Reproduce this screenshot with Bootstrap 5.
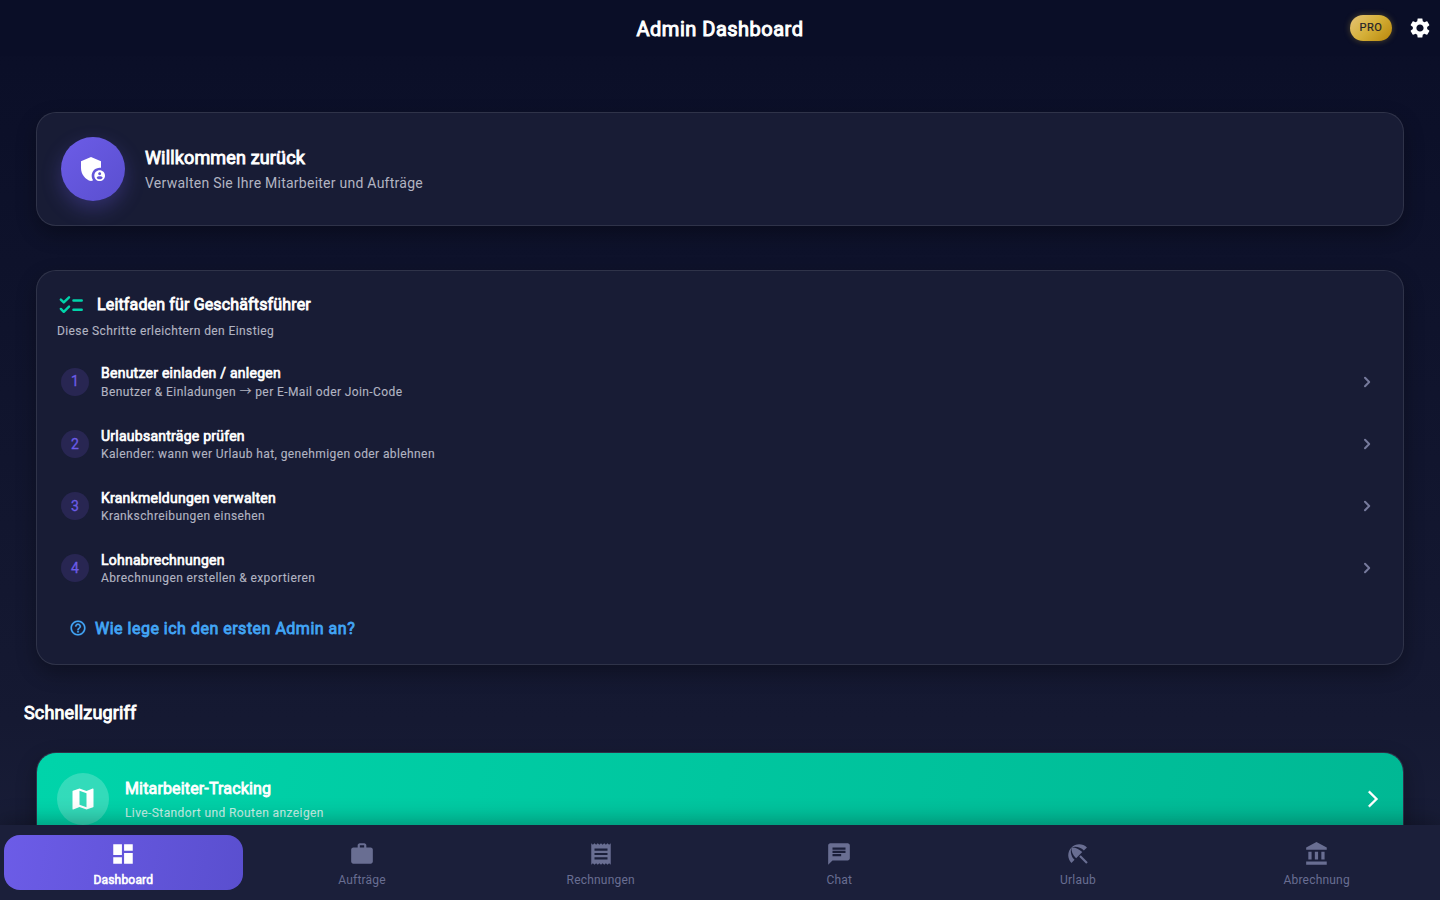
<!DOCTYPE html>
<html lang="de">
<head>
<meta charset="utf-8">
<meta name="viewport" content="width=device-width, initial-scale=1">
<title>Admin Dashboard</title>
<link rel="stylesheet" href="https://cdn.jsdelivr.net/npm/bootstrap@5.3.0/dist/css/bootstrap.min.css">
<style>
html,body{height:100%}
body{font-family:Roboto,"Liberation Sans",sans-serif;font-size:14px;color:#fff;overflow:hidden;background:#0a0e27}
.shell{height:900px;background:linear-gradient(180deg,#0a0e27 0%,#151932 80%,#1a1f3a 100%)}
.strong{-webkit-text-stroke:.05em currentColor}
.semi{-webkit-text-stroke:.02em currentColor}
svg{display:block;fill:currentColor;flex:none}
.topbar{height:56px;background:#0a0e27}
.topbar h1{font-size:20px;line-height:28px;letter-spacing:.5px;padding-top:2px}
.side{right:8px;top:0;height:56px}
.pro{width:42px;height:26px;border-radius:13px;font-size:11px;letter-spacing:.5px;color:#23222a;background:linear-gradient(135deg,#e6c477 0%,#d4af37 50%,#b8860b 100%);box-shadow:0 0 6px rgba(212,175,55,.35)}
.panel{margin:0 36px;border:1px solid rgba(255,255,255,.1);border-radius:20px;background:#181c35;box-shadow:0 8px 20px rgba(0,0,0,.3)}
.welcome{height:114px;margin-top:56px;padding:0 24px}
.avatar{width:64px;height:64px;background:linear-gradient(135deg,#6c5ce7,#5a4fcf);box-shadow:0 8px 20px rgba(108,92,231,.3)}
.welcome h2{font-size:18px;line-height:24px;letter-spacing:.15px;padding-top:1px}
.muted{color:#b2b4c2}
.welcome p{font-size:14px;line-height:20px;letter-spacing:.25px;margin-top:3px}
.guide{height:395px;margin-top:44px;padding:20px}
.guide h2{font-size:16px;line-height:24px;letter-spacing:.15px}
.small-copy{font-size:12px;line-height:16px;letter-spacing:.4px;-webkit-text-stroke:.12px currentColor}
.steps{margin-top:11px}
.step{height:62px;padding:0 4px}
.step:first-child{height:63px}
.step:first-child p{padding-top:1px}
.num{width:28px;height:28px;background:#282652;color:#6c5ce7;font-size:14px}
.step h3{font-size:14px;line-height:20px;letter-spacing:.25px}
.arrow{font-family:"Noto Sans CJK JP",sans-serif;line-height:1}
.chev{color:#767a9c}
.help{color:#42a5f5;font-size:16px;line-height:20px;letter-spacing:.5px;margin:20px 0 0 12px}
.help svg{margin-bottom:2px}
.section-title{font-size:18px;line-height:24px;letter-spacing:.15px;margin:36px 0 0 24px}
.tracking{height:94px;margin-top:27px;padding:20px;background:linear-gradient(100deg,#00d4aa,#00b894) padding-box}
.map-dot{width:52px;height:52px;background:rgba(255,255,255,.2)}
.tracking h3{font-size:16px;line-height:24px;letter-spacing:.15px}
.live{color:rgba(255,255,255,.75);margin-top:4px}
.bottom{height:75px;padding:10px 4px;background:#1b1f3a;box-shadow:0 -4px 20px rgba(0,0,0,.3)}
.tab{height:55px;border-radius:16px;color:#696e92;font-size:12px;padding-top:6px}
.tab.on{color:#fff;background:linear-gradient(100deg,#6c5ce7,#5a4fcf)}
.tab span{line-height:16px;letter-spacing:.2px;margin-top:5px}
</style>
</head>
<body>
<div class="shell d-flex flex-column">
  <header class="topbar position-relative d-flex align-items-center justify-content-center flex-shrink-0">
    <h1 class="strong fw-normal m-0">Admin Dashboard</h1>
    <div class="side position-absolute d-flex align-items-center">
      <span class="pro semi d-flex align-items-center justify-content-center">PRO</span>
      <svg class="ms-3" width="24" height="24" viewBox="0 0 24 24"><path d="M19.14 12.94c.04-.3.06-.61.06-.94 0-.32-.02-.64-.07-.94l2.03-1.58c.18-.14.23-.41.12-.61l-1.92-3.32c-.12-.22-.37-.29-.59-.22l-2.39.96c-.5-.38-1.03-.7-1.62-.94l-.36-2.54c-.04-.24-.24-.41-.48-.41h-3.84c-.24 0-.43.17-.47.41l-.36 2.54c-.59.24-1.13.57-1.62.94l-2.39-.96c-.22-.08-.47 0-.59.22L2.74 8.87c-.12.21-.08.47.12.61l2.03 1.58c-.05.3-.09.63-.09.94s.02.64.07.94l-2.03 1.58c-.18.14-.23.41-.12.61l1.92 3.32c.12.22.37.29.59.22l2.39-.96c.5.38 1.03.7 1.62.94l.36 2.54c.05.24.24.41.48.41h3.84c.24 0 .44-.17.47-.41l.36-2.54c.59-.24 1.13-.56 1.62-.94l2.39.96c.22.08.47 0 .59-.22l1.92-3.32c.12-.22.07-.47-.12-.61l-2.01-1.58zM12 15.6c-1.98 0-3.6-1.62-3.6-3.6s1.62-3.6 3.6-3.6 3.6 1.62 3.6 3.6-1.62 3.6-3.6 3.6z"/></svg>
    </div>
  </header>

  <main class="flex-grow-1 overflow-hidden">
    <section class="panel welcome d-flex align-items-center">
      <div class="avatar rounded-circle d-flex align-items-center justify-content-center">
        <svg width="32" height="32" viewBox="0 0 24 24"><path d="M17 11c.34 0 .67.04 1 .09V6.27L10.5 3 3 6.27v4.91c0 4.54 3.2 8.79 7.5 9.82.55-.13 1.08-.32 1.6-.55-.69-.98-1.1-2.17-1.1-3.45 0-3.31 2.69-6 6-6z"/><path d="M17 13c-2.21 0-4 1.79-4 4s1.79 4 4 4 4-1.79 4-4-1.79-4-4-4zm0 1.38c.62 0 1.12.51 1.12 1.12s-.51 1.12-1.12 1.12-1.12-.51-1.12-1.12.5-1.12 1.12-1.12zm0 5.37c-.93 0-1.74-.46-2.24-1.17.05-.72 1.51-1.08 2.24-1.08s2.19.36 2.24 1.08c-.5.71-1.31 1.17-2.24 1.17z"/></svg>
      </div>
      <div class="ms-3 ps-1">
        <h2 class="strong fw-normal m-0">Willkommen zurück</h2>
        <p class="muted mb-0">Verwalten Sie Ihre Mitarbeiter und Aufträge</p>
      </div>
    </section>

    <section class="panel guide">
      <div class="d-flex align-items-center">
        <svg width="28" height="28" viewBox="0 0 24 24" style="color:#00d4aa"><path fill="none" stroke="currentColor" stroke-width="2.1" stroke-linecap="round" stroke-linejoin="round" d="M14.1 8.1h7.1M14.1 16.1h7.1M3.3 7.4L5.8 9.8 10.3 5.4M3.3 15.4l2.5 2.4 4.5-4.4"/></svg>
        <h2 class="strong fw-normal m-0 ms-2 ps-1">Leitfaden für Geschäftsführer</h2>
      </div>
      <p class="muted small-copy m-0 mt-1">Diese Schritte erleichtern den Einstieg</p>
      <div class="steps">
        <div class="step d-flex align-items-center"><div class="num semi rounded-circle d-flex align-items-center justify-content-center">1</div><div class="flex-grow-1 ms-2 ps-1"><h3 class="strong fw-normal m-0">Benutzer einladen / anlegen</h3><p class="muted small-copy m-0">Benutzer &amp; Einladungen <span class="arrow">→</span> per E-Mail oder Join-Code</p></div><svg class="chev" width="24" height="24" viewBox="0 0 24 24"><use href="#chev"/></svg></div>
        <div class="step d-flex align-items-center"><div class="num semi rounded-circle d-flex align-items-center justify-content-center">2</div><div class="flex-grow-1 ms-2 ps-1"><h3 class="strong fw-normal m-0">Urlaubsanträge prüfen</h3><p class="muted small-copy m-0">Kalender: wann wer Urlaub hat, genehmigen oder ablehnen</p></div><svg class="chev" width="24" height="24" viewBox="0 0 24 24"><use href="#chev"/></svg></div>
        <div class="step d-flex align-items-center"><div class="num semi rounded-circle d-flex align-items-center justify-content-center">3</div><div class="flex-grow-1 ms-2 ps-1"><h3 class="strong fw-normal m-0">Krankmeldungen verwalten</h3><p class="muted small-copy m-0">Krankschreibungen einsehen</p></div><svg class="chev" width="24" height="24" viewBox="0 0 24 24"><use href="#chev"/></svg></div>
        <div class="step d-flex align-items-center"><div class="num semi rounded-circle d-flex align-items-center justify-content-center">4</div><div class="flex-grow-1 ms-2 ps-1"><h3 class="strong fw-normal m-0">Lohnabrechnungen</h3><p class="muted small-copy m-0">Abrechnungen erstellen &amp; exportieren</p></div><svg class="chev" width="24" height="24" viewBox="0 0 24 24"><use href="#chev"/></svg></div>
      </div>
      <div class="help d-flex align-items-center gap-2"><svg width="18" height="18" viewBox="0 0 24 24"><path stroke="currentColor" stroke-width=".3" d="M11 18h2v-2h-2v2zm1-16C6.48 2 2 6.48 2 12s4.48 10 10 10 10-4.48 10-10S17.52 2 12 2zm0 18c-4.41 0-8-3.59-8-8s3.59-8 8-8 8 3.59 8 8-3.59 8-8 8zm0-14c-2.21 0-4 1.79-4 4h2c0-1.1.9-2 2-2s2 .9 2 2c0 2-3 1.75-3 5h2c0-2.25 3-2.5 3-5 0-2.21-1.79-4-4-4z"/></svg><span class="strong">Wie lege ich den ersten Admin an?</span></div>
    </section>

    <h2 class="section-title strong fw-normal mb-0">Schnellzugriff</h2>
    <section class="panel tracking d-flex align-items-start">
      <div class="map-dot rounded-circle d-flex align-items-center justify-content-center"><svg width="28" height="28" viewBox="0 0 24 24"><path d="M20.5 3l-.16.03L15 5.1 9 3 3.36 4.9c-.21.07-.36.25-.36.48V20.5c0 .28.22.5.5.5l.16-.03L9 18.9l6 2.1 5.64-1.9c.21-.07.36-.25.36-.48V3.5c0-.28-.22-.5-.5-.5zM15 19l-6-2.11V5l6 2.11V19z"/></svg></div>
      <div class="flex-grow-1 ms-3 mt-1"><h3 class="strong fw-normal m-0">Mitarbeiter-Tracking</h3><p class="small-copy live mb-0">Live-Standort und Routen anzeigen</p></div>
      <svg class="mt-3" width="20" height="20" viewBox="0 0 24 24"><path stroke="currentColor" stroke-width=".4" d="M6.23 20.23L8 22l10-10L8 2 6.23 3.77 14.46 12z"/></svg>
    </section>
  </main>

  <nav class="bottom position-relative d-flex flex-shrink-0">
    <div class="tab on flex-fill w-100 d-flex flex-column align-items-center"><svg width="26" height="26" viewBox="0 0 24 24"><path d="M3 13h8V3H3v10zm0 8h8v-6H3v6zm10 0h8V11h-8v10zm0-18v6h8V3h-8z"/></svg><span class="strong">Dashboard</span></div>
    <div class="tab flex-fill w-100 d-flex flex-column align-items-center"><svg width="26" height="26" viewBox="0 0 24 24"><path d="M20 6h-4V4c0-1.11-.89-2-2-2h-4c-1.11 0-2 .89-2 2v2H4c-1.11 0-1.99.89-1.99 2L2 19c0 1.11.89 2 2 2h16c1.11 0 2-.89 2-2V8c0-1.11-.89-2-2-2zm-6 0h-4V4h4v2z"/></svg><span>Aufträge</span></div>
    <div class="tab flex-fill w-100 d-flex flex-column align-items-center"><svg width="26" height="26" viewBox="0 0 24 24"><path d="M18 17H6v-2h12v2zm0-4H6v-2h12v2zm0-4H6V7h12v2zM3 22l1.5-1.5L6 22l1.5-1.5L9 22l1.5-1.5L12 22l1.5-1.5L15 22l1.5-1.5L18 22l1.5-1.5L21 22V2l-1.5 1.5L18 2l-1.5 1.5L15 2l-1.5 1.5L12 2l-1.5 1.5L9 2 7.5 3.5 6 2 4.5 3.5 3 2v20z"/></svg><span>Rechnungen</span></div>
    <div class="tab flex-fill w-100 d-flex flex-column align-items-center"><svg width="26" height="26" viewBox="0 0 24 24"><path d="M20 2H4c-1.1 0-1.99.9-1.99 2L2 22l4-4h14c1.1 0 2-.9 2-2V4c0-1.1-.9-2-2-2zM6 9h12v2H6V9zm8 5H6v-2h8v2zm4-6H6V6h12v2z"/></svg><span>Chat</span></div>
    <div class="tab flex-fill w-100 d-flex flex-column align-items-center"><svg width="26" height="26" viewBox="0 0 24 24"><path d="M13.127 14.56l1.43-1.43 6.44 6.443L19.57 21zm4.293-5.73l2.86-2.86c-3.95-3.95-10.35-3.96-14.3-.02 3.93-1.3 8.31-.25 11.44 2.88zM5.95 5.98c-3.94 3.95-3.93 10.35.02 14.3l2.86-2.86C5.7 14.29 4.65 9.91 5.95 5.98zm.02-.02l-.01.01c-.38 3.01 1.17 6.88 4.3 10.02l5.73-5.73c-3.13-3.13-7.01-4.68-10.02-4.3z"/></svg><span>Urlaub</span></div>
    <div class="tab flex-fill w-100 d-flex flex-column align-items-center"><svg width="26" height="26" viewBox="0 0 24 24"><path d="M4 10v7h3v-7H4zm6 0v7h3v-7h-3zM2 22h19v-3H2v3zm14-12v7h3v-7h-3zm-4.5-9L2 6v2h19V6l-9.5-5z"/></svg><span>Abrechnung</span></div>
  </nav>
</div>
<svg width="0" height="0" class="position-absolute"><defs><path id="chev" fill="none" stroke="currentColor" stroke-width="2" stroke-linecap="round" stroke-linejoin="round" d="M10 7.7l4.2 4.3-4.2 4.3"/></defs></svg>
<script src="https://cdn.jsdelivr.net/npm/bootstrap@5.3.0/dist/js/bootstrap.bundle.min.js"></script>
</body>
</html>
